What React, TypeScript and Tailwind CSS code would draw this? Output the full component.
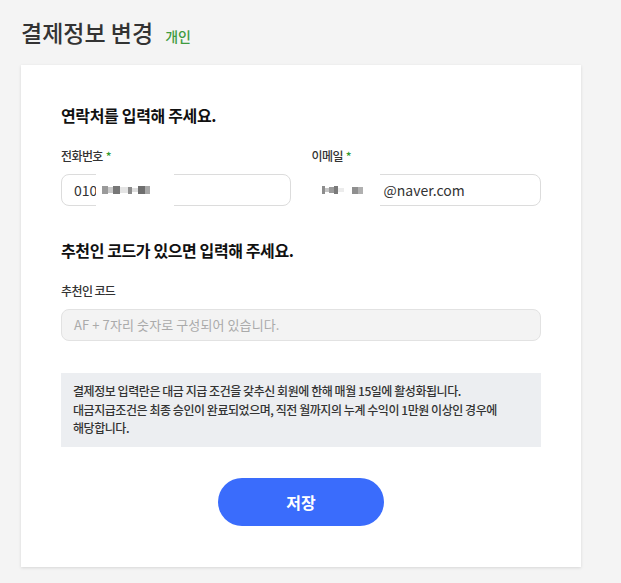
const font = { fontFamily: '"Noto Sans CJK KR", "Noto Sans", sans-serif' };

function Blocks({ items }: { items: [number, number, string][] }) {
  return (
    <span className="inline-flex items-center">
      {items.map(([w, h, c], i) => (
        <span key={i} className="inline-block" style={{ width: w, height: h, background: c }} />
      ))}
    </span>
  );
}

export default function App() {
  return (
    <div className="min-h-[583px] w-[621px] bg-[#f4f4f4] pt-[15px] pl-[21px] pr-[40px] pb-[17px]" style={font}>
      <div className="flex items-baseline gap-[12px]">
        <h1 className="text-[23px] leading-[34px] font-medium text-[#333]">결제정보 변경</h1>
        <span className="text-[14px] font-medium text-[#3f9b3f]">개인</span>
      </div>

      <div className="mt-[16px] bg-white shadow-[0_1px_3px_rgba(0,0,0,0.12)] px-[40px] pt-[38px] pb-[41px]">
        <h2 className="text-[16px] leading-[24px] font-bold tracking-[-0.35px] text-[#111]">연락처를 입력해 주세요.</h2>

        <div className="mt-[20px] grid grid-cols-2 gap-[21px]">
          <div>
            <label className="block text-[12px] leading-[18px] font-medium tracking-[-0.6px] text-[#333]">
              전화번호<span className="ml-[3px] text-[#2e9b2e]">*</span>
            </label>
            <div className="relative mt-[9px] h-[32px] rounded-[8px] border border-[#dcdcdc] flex items-center pl-[12px] text-[14px] text-[#333]">
              <span>010</span>
              <span className="absolute left-[34px] top-[-4px] h-[38px] w-[78px] bg-white flex items-center pl-[6px]">
                <Blocks items={[[6, 8, '#9a9a9a'], [5, 6, '#c9c9c9'], [7, 8, '#777'], [8, 6, '#e4e4e4'], [4, 7, '#8c8c8c'], [6, 4, '#ddd'], [7, 8, '#6e6e6e'], [5, 8, '#a8a8a8']]} />
              </span>
            </div>
          </div>
          <div>
            <label className="block text-[12px] leading-[18px] font-medium tracking-[-0.6px] text-[#333]">
              이메일<span className="ml-[3px] text-[#2e9b2e]">*</span>
            </label>
            <div className="relative mt-[9px] h-[32px] rounded-[8px] border border-[#dcdcdc] flex items-center pl-[71px] text-[14px] text-[#333]">
              <span className="absolute left-[-1px] top-[-4px] h-[38px] w-[68px] bg-white flex items-center pl-[10px]">
                <Blocks items={[[3, 8, '#8d8d8d'], [4, 4, '#c5c5c5'], [5, 6, '#9b9b9b'], [4, 8, '#7a7a7a'], [6, 4, '#ececec'], [8, 8, '#fff'], [6, 7, '#8f8f8f'], [5, 7, '#b0b0b0']]} />
              </span>
              <span>@naver.com</span>
            </div>
          </div>
        </div>

        <h2 className="mt-[32px] text-[16px] leading-[24px] font-bold tracking-[-0.4px] text-[#111]">추천인 코드가 있으면 입력해 주세요.</h2>
        <label className="mt-[20px] block text-[12px] leading-[18px] font-medium tracking-[-0.6px] text-[#333]">추천인 코드</label>
        <div className="mt-[9px] h-[32px] rounded-[8px] border border-[#e2e2e2] bg-[#f3f3f3] flex items-center pl-[12px] text-[13px] tracking-[0.1px] text-[#aaa]">
          AF + 7자리 숫자로 구성되어 있습니다.
        </div>

        <div className="mt-[32px] bg-[#eceef1] px-[12px] py-[9px] text-[12px] leading-[18.5px] font-medium tracking-[-0.45px] text-[#333]">
          결제정보 입력란은 대금 지급 조건을 갖추신 회원에 한해 매월 15일에 활성화됩니다.
          <br />
          대금지급조건은 최종 승인이 완료되었으며, 직전 월까지의 누계 수익이 1만원 이상인 경우에
          <br />
          해당합니다.
        </div>

        <div className="mt-[31px] flex justify-center">
          <button className="h-[48px] w-[166px] rounded-full bg-[#3a6cfc] text-white text-[16px] font-bold">저장</button>
        </div>
      </div>
    </div>
  );
}
